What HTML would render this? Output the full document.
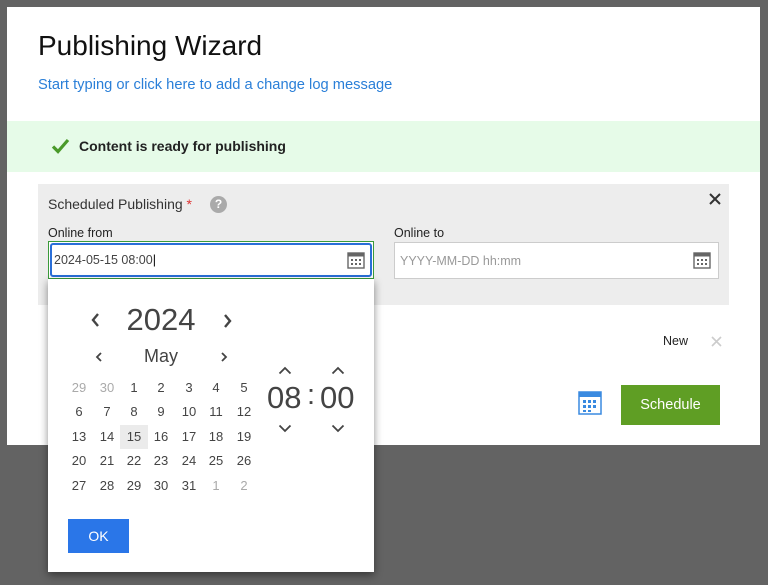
<!DOCTYPE html>
<html><head><meta charset="utf-8"><style>
*{margin:0;padding:0;box-sizing:border-box}
body{width:768px;height:585px;background:#636363;font-family:"Liberation Sans","DejaVu Sans",sans-serif;position:relative;overflow:hidden;color:#333}
.a{position:absolute}
.dlg{left:7px;top:7px;width:753px;height:438px;background:#fff}
.c{position:absolute;width:28px;text-align:center;font-size:13px;color:#444}
.g{color:#aaa}
</style></head><body>
<div class="a dlg"></div>
<div class="a" style="left:38px;top:30px;font-size:28px;color:#111">Publishing Wizard</div>
<div class="a" style="left:38px;top:77px;font-size:14.7px;color:#2a7fd8">Start typing or click here to add a change log message</div>
<div class="a" style="left:7px;top:121px;width:753px;height:51px;background:#e6fbe8"></div>
<svg class="a" style="left:51px;top:138px" width="19" height="16" viewBox="0 0 19 16"><path d="M2 8.5l5 5L17 2" stroke="#4a9a2a" stroke-width="3.2" fill="none"/></svg>
<div class="a" style="left:79px;top:138px;font-size:14px;font-weight:bold;color:#222">Content is ready for publishing</div>
<div class="a" style="left:38px;top:184px;width:691px;height:121px;background:#ededed"></div>
<div class="a" style="left:48px;top:196px;font-size:14px;color:#333">Scheduled Publishing <span style="color:#d33">*</span></div>
<div class="a" style="left:210px;top:196px;width:17px;height:17px;border-radius:50%;background:#aaa;color:#fff;font-size:12px;font-weight:bold;text-align:center;line-height:17px">?</div>
<svg class="a" style="left:709px;top:193px" width="12" height="12" viewBox="0 0 12 12"><path d="M1 1L11 11M11 1L1 11" stroke="#333" stroke-width="2"/></svg>
<div class="a" style="left:48px;top:226px;font-size:12.5px;color:#222">Online from</div>
<div class="a" style="left:394px;top:226px;font-size:12.5px;color:#222">Online to</div>
<div class="a" style="left:48px;top:241px;width:326px;height:38px;border:1px solid #3a9a3a;background:#fff"><div style="position:absolute;left:1px;top:1px;right:1px;bottom:1px;border:2px solid #2a6fd8;border-radius:3px"></div></div>
<div class="a" style="left:54px;top:253px;font-size:12.5px;color:#444">2024-05-15 08:00<span style="color:#000">|</span></div>
<div class="a" style="left:394px;top:242px;width:325px;height:37px;border:1px solid #ccc;background:#fff"></div>
<div class="a" style="left:400px;top:254px;font-size:12.5px;color:#999">YYYY-MM-DD hh:mm</div>
<svg class="a" style="left:347px;top:251px" width="18" height="18" viewBox="0 0 18 18"><rect x="1" y="2" width="16" height="15" fill="#fff" stroke="#666" stroke-width="1.4"/><rect x="1" y="2" width="16" height="3.5" fill="#666"/><g fill="#666"><rect x="4" y="8" width="2" height="2"/><rect x="8" y="8" width="2" height="2"/><rect x="12" y="8" width="2" height="2"/><rect x="4" y="12" width="2" height="2"/><rect x="8" y="12" width="2" height="2"/><rect x="12" y="12" width="2" height="2"/></g></svg>
<svg class="a" style="left:693px;top:251px" width="18" height="18" viewBox="0 0 18 18"><rect x="1" y="2" width="16" height="15" fill="#fff" stroke="#666" stroke-width="1.4"/><rect x="1" y="2" width="16" height="3.5" fill="#666"/><g fill="#666"><rect x="4" y="8" width="2" height="2"/><rect x="8" y="8" width="2" height="2"/><rect x="12" y="8" width="2" height="2"/><rect x="4" y="12" width="2" height="2"/><rect x="8" y="12" width="2" height="2"/><rect x="12" y="12" width="2" height="2"/></g></svg>
<div class="a" style="left:663px;top:334px;font-size:12.5px;color:#222">New</div>
<svg class="a" style="left:711px;top:336px" width="11" height="11" viewBox="0 0 11 11"><path d="M1 1L10 10M10 1L1 10" stroke="#ccc" stroke-width="1.6"/></svg>
<svg class="a" style="left:578px;top:389px" width="24" height="26" viewBox="0 0 24 26"><rect x="1" y="3" width="22" height="22" fill="#fff" stroke="#3a8ae0" stroke-width="1.5"/><rect x="1" y="3" width="22" height="5" fill="#3a8ae0"/><g fill="#3a8ae0"><rect x="5" y="11" width="3" height="3"/><rect x="10" y="11" width="3" height="3"/><rect x="15" y="11" width="3" height="3"/><rect x="5" y="16" width="3" height="3"/><rect x="10" y="16" width="3" height="3"/><rect x="15" y="16" width="3" height="3"/><rect x="5" y="21" width="3" height="2"/><rect x="10" y="21" width="3" height="2"/></g></svg>
<div class="a" style="left:621px;top:385px;width:99px;height:40px;background:#5f9e24;color:#fff;font-size:14.5px;text-align:center;line-height:40px">Schedule</div>
<div class="a" style="left:48px;top:279px;width:326px;height:293px;background:#fff;box-shadow:0 3px 8px rgba(0,0,0,.45)"></div>
<svg class="a" style="left:90px;top:312px" width="10" height="16" viewBox="0 0 10 16"><path d="M8 2L3 8l5 6" stroke="#444" stroke-width="2.4" fill="none"/></svg>
<svg class="a" style="left:223px;top:313px" width="10" height="16" viewBox="0 0 10 16"><path d="M2 2l5 6-5 6" stroke="#444" stroke-width="2.4" fill="none"/></svg>
<div class="a" style="left:110px;top:302px;width:102px;text-align:center;font-size:31px;color:#444">2024</div>
<svg class="a" style="left:95px;top:351px" width="8" height="12" viewBox="0 0 8 12"><path d="M6 2L2 6l4 4" stroke="#444" stroke-width="1.8" fill="none"/></svg>
<svg class="a" style="left:220px;top:351px" width="8" height="12" viewBox="0 0 8 12"><path d="M2 2l4 4-4 4" stroke="#444" stroke-width="1.8" fill="none"/></svg>
<div class="a" style="left:130px;top:346px;width:62px;text-align:center;font-size:18px;color:#444">May</div>
<div class="a" style="left:120px;top:425px;width:28px;height:24px;background:#ebebeb"></div>
<div id="cal"></div>
<svg class="a" style="left:278px;top:366px" width="14" height="9" viewBox="0 0 14 9"><path d="M1.5 7.5L7 2l5.5 5.5" stroke="#444" stroke-width="1.8" fill="none"/></svg>
<svg class="a" style="left:331px;top:366px" width="14" height="9" viewBox="0 0 14 9"><path d="M1.5 7.5L7 2l5.5 5.5" stroke="#444" stroke-width="1.8" fill="none"/></svg>
<svg class="a" style="left:278px;top:424px" width="14" height="9" viewBox="0 0 14 9"><path d="M1.5 1.5L7 7l5.5-5.5" stroke="#444" stroke-width="1.8" fill="none"/></svg>
<svg class="a" style="left:331px;top:424px" width="14" height="9" viewBox="0 0 14 9"><path d="M1.5 1.5L7 7l5.5-5.5" stroke="#444" stroke-width="1.8" fill="none"/></svg>
<div class="a" style="left:267px;top:380px;font-size:31px;color:#444">08</div>
<div class="a" style="left:307px;top:379px;font-size:29px;color:#444">:</div>
<div class="a" style="left:320px;top:380px;font-size:31px;color:#444">00</div>
<div class="a" style="left:68px;top:519px;width:61px;height:34px;background:#2a76e8;color:#fff;font-size:14px;text-align:center;line-height:34px">OK</div>
<script>
var d=[["29g","30g","1","2","3","4","5"],["6","7","8","9","10","11","12"],["13","14","15","16","17","18","19"],["20","21","22","23","24","25","26"],["27","28","29","30","31","1g","2g"]];
var xs=[79,107,134,161,189,216,244],ys=[380,404,429,453,478],h="";
d.forEach(function(r,i){r.forEach(function(v,j){var g=v.slice(-1)=="g";h+='<div class="c'+(g?' g':'')+'" style="left:'+(xs[j]-14)+'px;top:'+ys[i]+'px">'+(g?v.slice(0,-1):v)+'</div>';});});
document.getElementById("cal").innerHTML=h;
</script>
</body></html>
